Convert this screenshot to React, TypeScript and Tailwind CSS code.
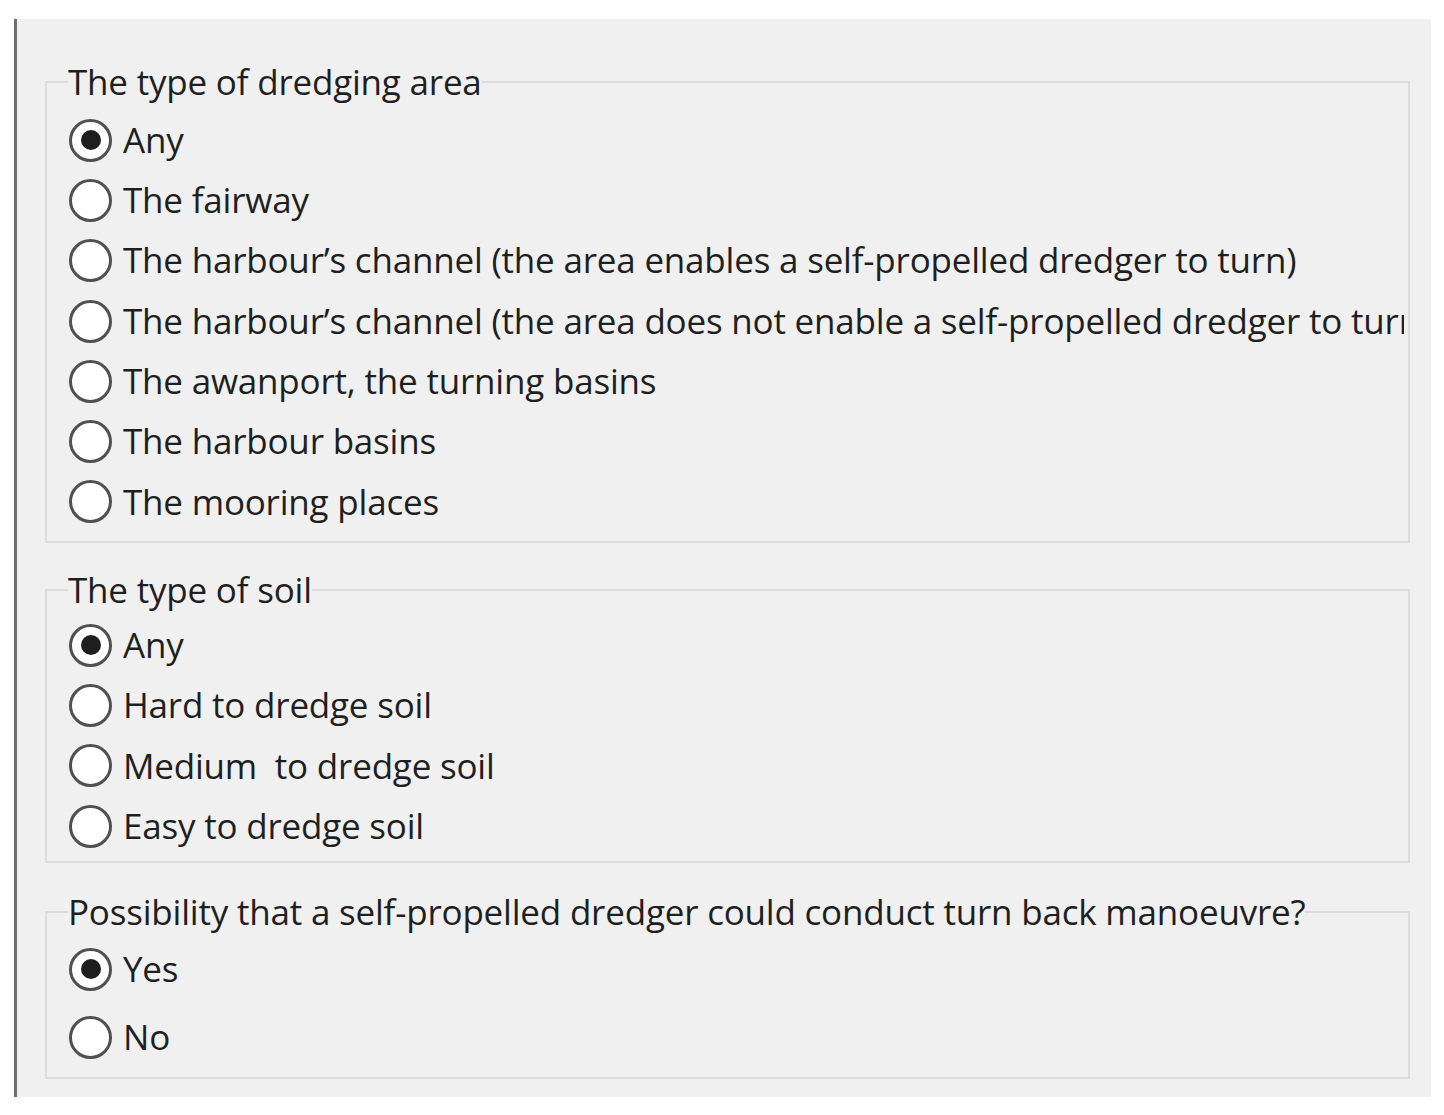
import React from 'react';

const font = { fontFamily: '"Open Sans", "Noto Sans", sans-serif' };

const Radio: React.FC<{ checked?: boolean }> = ({ checked }) => (
  <span className="flex h-[43px] w-[43px] shrink-0 items-center justify-center rounded-full border-[3px] border-[#505050] bg-white">
    {checked && <span className="h-[20px] w-[20px] rounded-full bg-[#1e1e1e]" />}
  </span>
);

const Option: React.FC<{ label: string; checked?: boolean; rowClass: string }> = ({ label, checked, rowClass }) => (
  <div className={`flex min-w-0 items-center gap-[11px] overflow-hidden whitespace-pre ${rowClass}`}>
    <Radio checked={checked} />
    <span className="shrink-0">{label}</span>
  </div>
);

interface GroupProps {
  title: string;
  options: string[];
  className: string;
  listClass: string;
  rowClass: string;
}

const Group: React.FC<GroupProps> = ({ title, options, className, listClass, rowClass }) => (
  <fieldset className={`ml-[28px] w-[1365px] min-w-0 border-2 border-[#dcdcdc] pl-[22px] pr-[4px] ${className}`}>
    <legend className="-ml-[1px] px-0 leading-[36px]">{title}</legend>
    <div className={`flex min-w-0 flex-col ${listClass}`}>
      {options.map((o, i) => (
        <Option key={o} label={o} checked={i === 0} rowClass={rowClass} />
      ))}
    </div>
  </fieldset>
);

export default function App() {
  return (
    <div className="h-[1115px] w-full bg-white pl-[14px] pt-[19px]" style={font}>
      <div className="h-[1078px] w-[1417px] border-l-[3px] border-[#6e6e6e] bg-[#f0f0f0] pt-[45px] text-[35px] tracking-[-0.2px] text-[#1f1f1f]">
        <Group
          title="The type of dredging area"
          className="pb-[9px]"
          listClass="mt-[10px]"
          rowClass="h-[60.3px]"
          options={[
            'Any',
            'The fairway',
            'The harbour’s channel (the area enables a self-propelled dredger to turn)',
            'The harbour’s channel (the area does not enable a self-propelled dredger to turn)',
            'The awanport, the turning basins',
            'The harbour basins',
            'The mooring places',
          ]}
        />
        <Group
          title="The type of soil"
          className="mt-[29px] pb-[5px]"
          listClass="mt-[7px]"
          rowClass="h-[60.3px]"
          options={['Any', 'Hard to dredge soil', 'Medium  to dredge soil', 'Easy to dredge soil']}
        />
        <Group
          title="Possibility that a self-propelled dredger could conduct turn back manoeuvre?"
          className="mt-[31px] pb-[6px]"
          listClass="mt-[5px]"
          rowClass="h-[68px]"
          options={['Yes', 'No']}
        />
      </div>
    </div>
  );
}
